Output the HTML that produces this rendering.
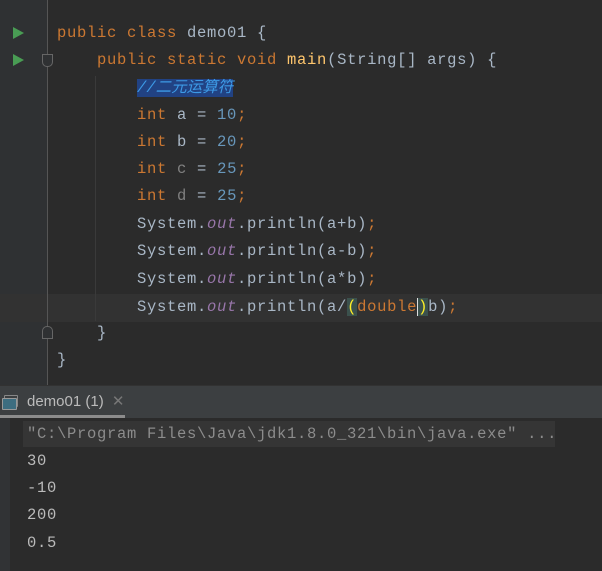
<!DOCTYPE html>
<html><head><meta charset="utf-8"><style>
*{margin:0;padding:0;box-sizing:border-box}
body{width:602px;height:571px;background:#2b2b2b;overflow:hidden;position:relative;font-family:"Liberation Mono","Noto Sans CJK SC",monospace;font-size:15.5px;letter-spacing:0.7px}
.gut{position:absolute;left:0;top:0;width:48px;height:385px;background:#2f3133}
.gl{position:absolute;left:47px;top:0;width:1px;height:385px;background:#555;z-index:3}
.cur{position:absolute;left:0;top:294px;width:602px;height:28px;background:#323232}
.ln{position:absolute;left:57px;height:27px;line-height:27px;color:#a9b7c6;white-space:pre}
.k{color:#cc7832}.n{color:#6897bb}.o{color:#9876aa;font-style:italic}.m{color:#ffc66d}.g{color:#808080}
.cm{background:#214283;color:#3d9ae6;font-style:italic;letter-spacing:0}
.br{background:#3b514d;color:#ffef28}
.play{position:absolute;left:13px;width:0;height:0;border-top:6px solid transparent;border-bottom:6px solid transparent;border-left:11px solid #499c54}
.guide{position:absolute;width:1px;background:#3a3a3a}
.fold{position:absolute;left:43px;width:11px;height:13px;border:1px solid #666;background:#2f3133;z-index:4}
.tab{position:absolute;left:0;top:385px;width:602px;height:33px;background:#3c3f41;border-top:1px solid #323232}
.con{position:absolute;left:27px;height:27px;line-height:27px;color:#bbbbbb;white-space:pre}
</style></head><body>
<div class="gut"></div>
<div class="cur"></div>
<div class="gl"></div>
<div class="guide" style="left:95px;top:76px;height:245px"></div>
<div class="play" style="top:27px"></div>
<div class="play" style="top:54px"></div>
<div class="fold" style="left:42px;top:54px;border-radius:0 0 5px 5px"></div>
<div class="fold" style="left:42px;top:326px;border-radius:5px 5px 0 0"></div>
<div class="ln" style="top:20px"><span class="k">public class </span>demo01 {</div>
<div class="ln" style="top:47px">    <span class="k">public static void </span><span class="m">main</span>(String[] args) {</div>
<div class="ln" style="top:75px">        <span class="cm">//二元运算符</span></div>
<div class="ln" style="top:102px">        <span class="k">int </span>a = <span class="n">10</span><span class="k">;</span></div>
<div class="ln" style="top:129px">        <span class="k">int </span>b = <span class="n">20</span><span class="k">;</span></div>
<div class="ln" style="top:156px">        <span class="k">int </span><span class="g">c</span> = <span class="n">25</span><span class="k">;</span></div>
<div class="ln" style="top:183px">        <span class="k">int </span><span class="g">d</span> = <span class="n">25</span><span class="k">;</span></div>
<div class="ln" style="top:211px">        System.<span class="o">out</span>.println(a+b)<span class="k">;</span></div>
<div class="ln" style="top:238px">        System.<span class="o">out</span>.println(a-b)<span class="k">;</span></div>
<div class="ln" style="top:266px">        System.<span class="o">out</span>.println(a*b)<span class="k">;</span></div>
<div class="ln" style="top:294px">        System.<span class="o">out</span>.println(a/<span class="br">(</span><span class="k">double</span><span class="br" style="border-left:1px solid #ddd">)</span>b)<span class="k">;</span></div>
<div class="ln" style="top:320px">    }</div>
<div class="ln" style="top:347px">}</div>
<div class="tab">
 <div style="position:absolute;left:4px;top:9px;width:14px;height:12px;border:1px solid #888;border-radius:1px"></div>
 <div style="position:absolute;left:2px;top:12px;width:15px;height:12px;border:1px solid #999;background:#3d6d80;border-radius:1px"></div>
 <div style="position:absolute;left:27px;top:6px;font-family:'Liberation Sans',sans-serif;font-size:15px;letter-spacing:0;color:#bbbbbb">demo01 (1) <span style="color:#777;margin-left:4px">✕</span></div>
 <div style="position:absolute;left:0;top:29px;width:125px;height:3px;background:#8c8c8c"></div>
</div>
<div style="position:absolute;left:0;top:418px;width:10px;height:153px;background:#313335"></div>
<div style="position:absolute;left:23px;top:421px;width:532px;height:26px;background:#353535"></div>
<div class="con" style="top:421px;color:#8c8c8c">"C:\Program Files\Java\jdk1.8.0_321\bin\java.exe" ...</div>
<div class="con" style="top:448px">30</div>
<div class="con" style="top:475px">-10</div>
<div class="con" style="top:502px">200</div>
<div class="con" style="top:530px">0.5</div>
</body></html>
